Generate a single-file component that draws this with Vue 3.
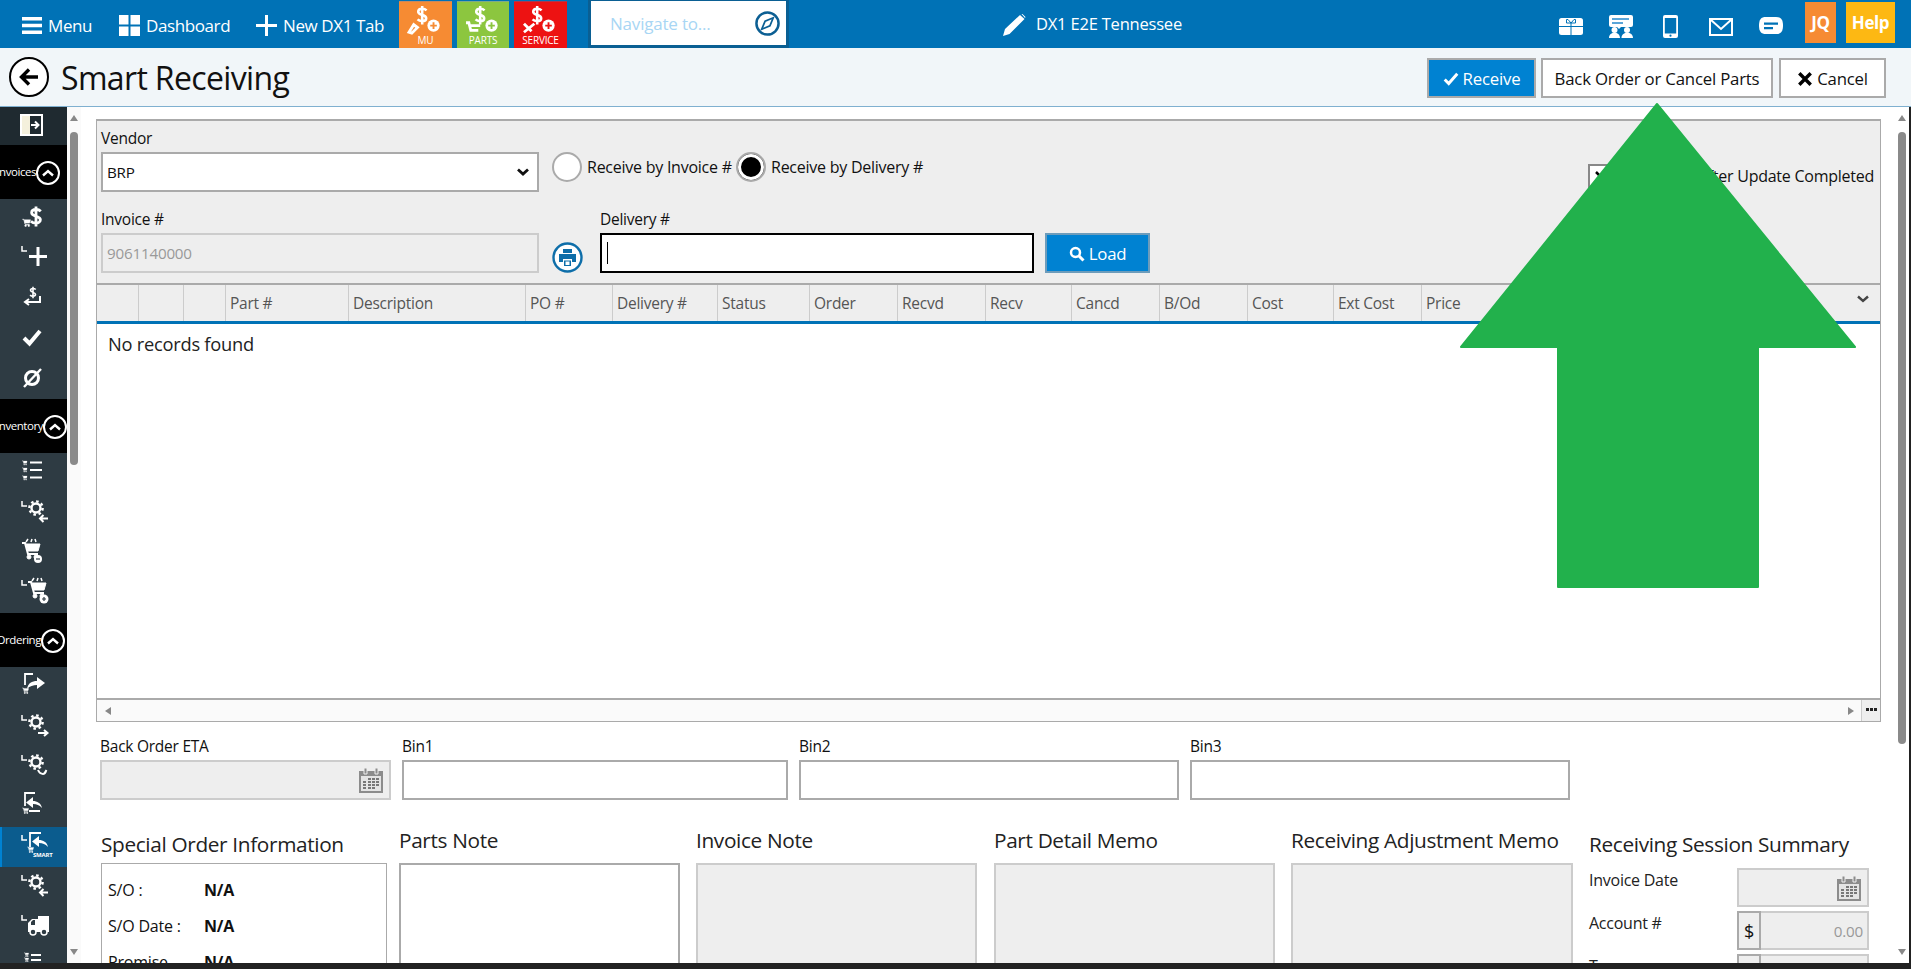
<script setup>
const sections = [
  { key: 'invoices', title: 'Invoices', items: ['cartdollar', 'plus', 'returndollar', 'check', 'nullset'] },
  { key: 'inventory', title: 'Inventory', items: ['cartlist', 'gearback', 'cartminus', 'cartplus'] },
  { key: 'ordering', title: 'Ordering', items: ['sendcart', 'gearforward', 'gearcycle', 'returncart', 'smart', 'gearback', 'truck', 'cartlist2'] }
]
const columns = ['', '', '', 'Part #', 'Description', 'PO #', 'Delivery #', 'Status', 'Order', 'Recvd', 'Recv', 'Cancd', 'B/Od', 'Cost', 'Ext Cost', 'Price']
const bins = ['Bin1', 'Bin2', 'Bin3']
const notes = [
  { title: 'Parts Note', cls: 'white' },
  { title: 'Invoice Note', cls: 'grey' },
  { title: 'Part Detail Memo', cls: 'grey detail' },
  { title: 'Receiving Adjustment Memo', cls: 'grey wide' }
]
const tiles = [
  { label: 'MU', cls: 'mu', mark: 'M9 32 L14 24 L18 27 L12 33 Z' },
  { label: 'PARTS', cls: 'parts', mark: 'M8 22 H11 L13 30 H21 M13 25 H23' },
  { label: 'SERVICE', cls: 'service', mark: 'M9 23 L17 31 M9 32 L20 23' }
]
const topIcons = ['gift', 'present', 'phone', 'mail', 'chat']
</script>

<template>
  <div class="app">
    <svg class="defs" aria-hidden="true">
      <symbol id="dollar" viewBox="0 0 16 26">
        <path d="M13.500 7C12 5.500 10.200 5 8 5 5.200 5 3 6.300 3 8.700c0 2.500 2.500 3.200 5 4 2.500.8 5 1.500 5 4 0 2.300-2.200 3.800-5 3.800-2.400 0-4.300-.7-5.800-2.200M8 1.500v23" fill="none" stroke="currentColor" stroke-width="3.200"/>
      </symbol>
      <symbol id="cal" viewBox="0 0 26 26">
        <path d="M1 4h24v22H1z" fill="#8c8c8c"/>
        <path d="M6 1h3v6H6zM17 1h3v6h-3z" fill="#8c8c8c" stroke="#eee"/>
        <path d="M3 9h20v15H3z" fill="#e4e4e4"/>
        <path d="M10 11h3v2h-3zM14 11h3v2h-3zM18 11h3v2h-3zM5 14h3v2H5zM10 14h3v2h-3zM14 14h3v2h-3zM18 14h3v2h-3zM5 17h3v2H5zM10 17h3v2h-3zM14 17h3v2h-3zM18 17h3v2h-3zM5 20h3v2H5zM10 20h3v2h-3zM14 20h3v2h-3z" fill="#777"/>
      </symbol>
      <symbol id="gift" viewBox="0 0 24 17">
        <rect width="24" height="17" rx="2.500" fill="#fff"/>
        <path d="M0 8.500h24M12 4v13" stroke="#0072b6" stroke-width="1"/>
        <path d="M12 5 9 1.500H7.500V5zM12 5l3-3.500h1.500V5z" fill="none" stroke="#0072b6" stroke-width="1"/>
      </symbol>
      <symbol id="present" viewBox="0 0 24 23">
        <path d="M2 0h20a2 2 0 0 1 2 2v8a2 2 0 0 1-2 2H12l-2 2-2-2H2a2 2 0 0 1-2-2V2a2 2 0 0 1 2-2z" fill="#fff"/>
        <path d="M3 3h17v2H3zM3 7h11v2H3z" fill="#5aa5d8"/>
        <circle cx="5.500" cy="15" r="3" fill="#fff"/><circle cx="18" cy="15" r="3" fill="#fff"/>
        <path d="M0 23c0-7 11-7 11 0zM12.500 23c0-7 11.500-7 11.500 0z" fill="#fff"/>
      </symbol>
      <symbol id="phone" viewBox="0 0 15 23">
        <path fill-rule="evenodd" d="M2 0h11a2 2 0 0 1 2 2v19a2 2 0 0 1-2 2H2a2 2 0 0 1-2-2V2a2 2 0 0 1 2-2zM1.800 3v15.500h11.400V3z" fill="#fff"/>
        <circle cx="7.500" cy="20.700" r="1.100" fill="#0072b6"/>
      </symbol>
      <symbol id="mail" viewBox="0 0 24 18">
        <path d="M1 1h22v16H1zM1.500 1.500 12 11 22.500 1.500" fill="none" stroke="#fff" stroke-width="2"/>
      </symbol>
      <symbol id="chat" viewBox="0 0 24 17">
        <path d="M7 0h10c5 0 7 2.500 7 8.500S22 17 17 17H7c-5 0-7-2.500-7-8.500S2 0 7 0z" fill="#fff"/>
        <path d="M5 5.500h14v2.200H5zM5 10h9v2.200H5z" fill="#0072b6"/>
      </symbol>
      <symbol id="compass" viewBox="0 0 26 26">
        <circle cx="13" cy="13" r="11.500" fill="none" stroke="#0c5f93" stroke-width="2.600"/>
        <path d="M19 7 15.500 15.500 7 19 10.500 10.500z" fill="none" stroke="#0c5f93" stroke-width="1.800"/>
      </symbol>
      <symbol id="chev" viewBox="0 0 14 10">
        <path d="M2 7.500 7 3l5 4.500" fill="none" stroke="currentColor" stroke-width="2.400"/>
      </symbol>
      <symbol id="gear" viewBox="0 0 20 20">
        <circle cx="10" cy="10" r="5.600" fill="none" stroke="#fff" stroke-width="3"/>
        <circle cx="10" cy="10" r="8.300" fill="none" stroke="#fff" stroke-width="3" stroke-dasharray="3.200 3.300"/>
      </symbol>
      <symbol id="cart" viewBox="0 0 20 20">
        <path d="M1 3h3l3 11h10" fill="none" stroke="#fff" stroke-width="2"/>
        <path d="M5 4h14l-2 7H7z" fill="#fff"/>
        <circle cx="8" cy="17" r="2" fill="#fff"/><circle cx="15" cy="17" r="2" fill="#fff"/>
      </symbol>
      <symbol id="lmark" viewBox="0 0 6 6">
        <path d="M1 0v5h5" fill="none" stroke="#fff" stroke-width="1.500"/>
      </symbol>
    </svg>

    <header class="topbar">
      <div class="nav-item menu">
        <svg class="ic-menu" viewBox="0 0 20 17"><path d="M0 0h20v3.500H0zM0 6.700h20v3.500H0zM0 13.500h20V17H0z" fill="#fff"/></svg>
        <span>Menu</span>
      </div>
      <div class="nav-item dash">
        <svg class="ic-dash" viewBox="0 0 21 21"><path d="M0 0h9.500v9.500H0zM11.500 0H21v9.500h-9.500zM0 11.500h9.500V21H0zM11.500 11.500H21V21h-9.500z" fill="#fff"/></svg>
        <span>Dashboard</span>
      </div>
      <div class="nav-item tab">
        <svg class="ic-dash" viewBox="0 0 21 21"><path d="M9 0h3v9h9v3h-9v9H9v-9H0V9h9z" fill="#fff"/></svg>
        <span>New DX1 Tab</span>
      </div>
      <div v-for="t in tiles" :key="t.label" class="tile" :class="t.cls">
        <svg class="tile-ic" viewBox="0 0 53 36">
          <use href="#dollar" x="16" y="3" width="14" height="22" color="#fff"/>
          <path :d="t.mark" fill="none" stroke="#fff" stroke-width="3"/>
          <circle cx="35" cy="25" r="6.500" fill="#fff"/>
          <path d="M35 21.500v7M31.500 25h7" class="tile-plus" stroke-width="2"/>
        </svg>
        <span>{{ t.label }}</span>
      </div>
      <div class="search-wrap">
        <div class="search">
          <span>Navigate to...</span>
          <svg class="ic-compass"><use href="#compass"/></svg>
        </div>
      </div>
      <div class="store">
        <svg class="ic-pencil" viewBox="0 0 25 23"><path d="M19 1l4.500 4L8.500 20 2 22l2-7zM20.500 0l1-.0 3 3-.5 1z" fill="#fff"/></svg>
        <span>DX1 E2E Tennessee</span>
      </div>
      <div class="tools">
        <svg v-for="i in topIcons" :key="i" class="tool" :class="i"><use :href="'#' + i"/></svg>
        <div class="badge jq">JQ</div>
        <div class="badge help">Help</div>
      </div>
    </header>

    <div class="subbar">
      <div class="back">
        <svg viewBox="0 0 24 24" class="ic-back"><path d="M21 12H5M12 4.500 4.500 12l7.500 7.500" fill="none" stroke="#000" stroke-width="3.400"/></svg>
      </div>
      <h1>Smart Receiving</h1>
      <div class="actions">
        <button class="btn primary"><svg class="ic-ok" viewBox="0 0 14 12"><path d="M1.500 6.500 5 10l7.500-8.500" fill="none" stroke="#fff" stroke-width="2.600"/></svg>Receive</button>
        <button class="btn bo">Back Order or Cancel Parts</button>
        <button class="btn cancel"><svg class="ic-ok" viewBox="0 0 14 14"><path d="M2 2l10 10M12 2 2 12" fill="none" stroke="#000" stroke-width="3"/></svg>Cancel</button>
      </div>
    </div>

    <div class="body">
      <aside class="sidebar">
        <div class="collapse">
          <svg viewBox="0 0 23 22" class="ic-collapse">
            <path d="M1 1h21v20H1z" fill="#1f2a30" stroke="#fff" stroke-width="2"/>
            <path d="M2 2h8v18H2z" fill="#f4f0dc"/>
            <path d="M11 11h7M15 7.500l3.500 3.500-3.500 3.500" fill="none" stroke="#fff" stroke-width="2"/>
          </svg>
        </div>
        <template v-for="s in sections" :key="s.key">
          <div class="side-head" :class="s.key">
            <span>{{ s.title }}</span>
            <i class="circle"><svg viewBox="0 0 14 10"><use href="#chev" color="#fff"/></svg></i>
          </div>
          <div v-for="(it, n) in s.items" :key="n" class="side-item" :class="{ active: it === 'smart' }">
            <svg class="side-ic" viewBox="0 0 67 40" fill="none" stroke="#fff">
              <template v-if="it === 'cartdollar'">
                <use href="#dollar" x="29" y="7" width="14" height="23" color="#fff"/>
                <use href="#cart" x="22" y="20" width="9" height="9"/>
              </template>
              <template v-else-if="it === 'plus'">
                <use href="#lmark" x="21" y="8" width="6" height="6"/>
                <path d="M38 9v19M29 18.500h18" stroke-width="3"/>
              </template>
              <template v-else-if="it === 'returndollar'">
                <use href="#dollar" x="29" y="8" width="8" height="13" color="#fff"/>
                <path d="M40 18v6H26M29 21l-4 3 4 3" stroke-width="2"/>
              </template>
              <path v-else-if="it === 'check'" d="M24 20l5.500 5.500L40 13" stroke-width="4"/>
              <template v-else-if="it === 'nullset'">
                <circle cx="32" cy="20" r="6.500" stroke-width="3"/>
                <path d="M24 29 41 11" stroke-width="2.400"/>
              </template>
              <template v-else-if="it === 'cartlist'">
                <use href="#cart" x="22" y="8" width="5.500" height="5.500"/>
                <use href="#cart" x="22" y="15" width="5.500" height="5.500"/>
                <use href="#cart" x="22" y="23" width="5.500" height="5.500"/>
                <path d="M30 10.500h12M30 18h12M30 25.500h12" stroke-width="2"/>
              </template>
              <template v-else-if="it === 'gearback'">
                <use href="#lmark" x="21" y="9" width="6" height="6"/>
                <use href="#gear" x="28" y="8" width="16" height="16"/>
                <path d="M48 26.500h-8M43.500 23l-3.500 3.500 3.500 3.500" stroke-width="2"/>
              </template>
              <template v-else-if="it === 'gearforward'">
                <use href="#lmark" x="21" y="9" width="6" height="6"/>
                <use href="#gear" x="28" y="8" width="16" height="16"/>
                <path d="M38 27h9M44 24l3.500 3-3.500 3" stroke-width="2"/>
              </template>
              <template v-else-if="it === 'gearcycle'">
                <use href="#lmark" x="21" y="9" width="6" height="6"/>
                <use href="#gear" x="28" y="8" width="16" height="16"/>
                <path d="M38 24c2 5 7 5 8 1M44 28l2.500-4" stroke-width="2"/>
              </template>
              <template v-else-if="it === 'cartminus'">
                <use href="#cart" x="21" y="8" width="20" height="20"/>
                <path d="M26 10l2-3M31 10l1-3M36 10l-1-3" stroke-width="1.500"/>
                <circle cx="38" cy="27" r="4" fill="#fff" stroke="none"/>
                <path d="M36 27h4" stroke="#2e3b43" stroke-width="1.200"/>
              </template>
              <template v-else-if="it === 'cartplus'">
                <use href="#lmark" x="21" y="8" width="6" height="6"/>
                <use href="#cart" x="27" y="7" width="20" height="20"/>
                <path d="M32 9l2-3M37 9l1-3M42 9l-1-3" stroke-width="1.500"/>
                <circle cx="44" cy="27" r="4.500" fill="#fff" stroke="none"/>
                <path d="M44 25v4M42 27h4" stroke="#2e3b43" stroke-width="1.200"/>
              </template>
              <template v-else-if="it === 'sendcart'">
                <path d="M33 8H25v11M25 8" stroke-width="1.800"/>
                <path d="M27 23c1-6 5-8 10-8v-4l8 6-8 6v-4c-4 0-7 1-10 4z" fill="#fff" stroke="none"/>
                <use href="#cart" x="22" y="21" width="7" height="7"/>
              </template>
              <template v-else-if="it === 'returncart'">
                <path d="M35 7H25v13M29 25h11" stroke-width="1.800"/>
                <path d="M42 22c-1-5-5-7-9-7v-4l-7 5.500 7 5.500v-4c4 0 6 1 9 4z" fill="#fff" stroke="none"/>
                <use href="#cart" x="22" y="21" width="7" height="7"/>
              </template>
              <template v-else-if="it === 'smart'">
                <use href="#lmark" x="21" y="9" width="6" height="6"/>
                <path d="M41 7H30v14" stroke-width="1.800"/>
                <path d="M48 21c-1-5-5-7-9-7v-4l-7 5.500 7 5.500v-4c4 0 6 1 9 4z" fill="#fff" stroke="none"/>
                <use href="#cart" x="27" y="20" width="7" height="7"/>
                <text x="33" y="31" class="smart-txt" fill="#fff" stroke="none">SMART</text>
              </template>
              <template v-else-if="it === 'truck'">
                <use href="#lmark" x="21" y="9" width="6" height="6"/>
                <path d="M38 10h11v16H28v-9l4-4h6z" fill="#fff" stroke="none"/>
                <path d="M31 19v-3l2-2h2v5z" fill="#2e3b43" stroke="none"/>
                <circle cx="33" cy="26" r="3" fill="#2e3b43" stroke="#fff" stroke-width="1.500"/>
                <circle cx="44" cy="26" r="3" fill="#2e3b43" stroke="#fff" stroke-width="1.500"/>
              </template>
              <template v-else-if="it === 'cartlist2'">
                <use href="#cart" x="24" y="6" width="5" height="5"/>
                <use href="#cart" x="24" y="11" width="5" height="5"/>
                <path d="M31 9h10M31 14h10" stroke-width="2"/>
              </template>
            </svg>
          </div>
        </template>
      </aside>

      <div class="vscroll left">
        <b class="arr up"></b><i class="thumb"></i><b class="arr down"></b>
      </div>

      <main class="content">
        <section class="panel">
          <div class="form-row one">
            <div class="field vendor">
              <label>Vendor</label>
              <div class="ctl select">
                <span>BRP</span>
                <svg class="sel-chev" viewBox="0 0 14 10"><path d="M2 2.500 7 7l5-4.500" fill="none" stroke="#111" stroke-width="2.800"/></svg>
              </div>
            </div>
            <div class="radio first"><i class="dot"></i><span>Receive by Invoice #</span></div>
            <div class="radio second"><i class="dot on"></i><span>Receive by Delivery #</span></div>
            <div class="print-after">
              <i class="box"><svg viewBox="0 0 14 14"><path d="M2 2l10 10M12 2 2 12" fill="none" stroke="#000" stroke-width="2.500"/></svg></i>
              <span>Print Label After Update Completed</span>
            </div>
          </div>
          <div class="form-row two">
            <div class="field vendor">
              <label>Invoice #</label>
              <div class="ctl disabled"><span>9061140000</span></div>
            </div>
            <div class="print">
              <svg viewBox="0 0 31 31">
                <circle cx="15.500" cy="15.500" r="14" fill="#fff" stroke="#0e6ea9" stroke-width="2.400"/>
                <path d="M11 7h9v4h-9zM7 12h17v8h-4v-3h-9v3H7z" fill="#0e6ea9"/>
                <path d="M12 18.500h7V24h-7z" fill="#0e6ea9"/>
                <path d="M13.500 19.500h4V23h-4z" fill="#fff"/>
              </svg>
            </div>
            <div class="field delivery">
              <label>Delivery #</label>
              <div class="ctl focus"><i class="caret"></i></div>
            </div>
            <button class="btn load">
              <svg class="ic-search" viewBox="0 0 16 16"><circle cx="6.500" cy="6.500" r="4.500" fill="none" stroke="#fff" stroke-width="2.500"/><path d="M10 10l4.500 4.500" stroke="#fff" stroke-width="3"/></svg>Load
            </button>
          </div>

          <div class="grid-head">
            <div v-for="(c, i) in columns" :key="i" class="th">{{ c }}</div>
            <div class="th last">
              <svg class="head-chev" viewBox="0 0 14 10"><path d="M2 2.500 7 7l5-4.500" fill="none" stroke="#444" stroke-width="2.400"/></svg>
            </div>
          </div>
          <div class="grid-body">No records found</div>
          <div class="hscroll">
            <b class="tri l"></b>
            <b class="tri r"></b>
            <div class="more"><svg viewBox="0 0 11 3" class="ic-more"><path d="M0 0h3v3H0zM4 0h3v3H4zM8 0h3v3H8z" fill="#222"/></svg></div>
          </div>
        </section>

        <div class="bin-row">
          <div class="field eta">
            <label>Back Order ETA</label>
            <div class="ctl disabled cal-ctl"><svg class="ic-cal"><use href="#cal"/></svg></div>
          </div>
          <div v-for="b in bins" :key="b" class="field bin" :class="b">
            <label>{{ b }}</label>
            <div class="ctl"></div>
          </div>
        </div>

        <div class="notes-row">
          <div class="col special">
            <h2 class="low">Special Order Information</h2>
            <div class="so-box">
              <div class="so"><span>S/O :</span><b>N/A</b></div>
              <div class="so"><span>S/O Date :</span><b>N/A</b></div>
              <div class="so"><span>Promise</span><b>N/A</b></div>
            </div>
          </div>
          <div v-for="n in notes" :key="n.title" class="col note" :class="n.cls">
            <h2>{{ n.title }}</h2>
            <div class="memo"></div>
          </div>
          <div class="col summary">
            <h2 class="low sum">Receiving Session Summary</h2>
            <div class="sum-row">
              <label>Invoice Date</label>
              <div class="ctl disabled cal-ctl small"><svg class="ic-cal"><use href="#cal"/></svg></div>
            </div>
            <div class="sum-row">
              <label>Account #</label>
              <div class="ctl disabled money"><i>$</i><span>0.00</span></div>
            </div>
            <div class="sum-row">
              <label>Tax</label>
              <div class="ctl disabled money"><i>$</i><span>0.00</span></div>
            </div>
          </div>
        </div>
      </main>

      <div class="vscroll right">
        <b class="arr up"></b><i class="thumb"></i><b class="arr down"></b>
      </div>
    </div>
    <div class="strip"></div>

    <svg class="big-arrow" viewBox="0 0 1911 969" aria-hidden="true">
      <path d="M1657 104 1855 347H1758V587H1558V347H1461Z" fill="#22b14c" stroke="#22b14c" stroke-width="2" stroke-linejoin="round"/>
    </svg>
  </div>
</template>

<style>
html, body { margin: 0; padding: 0; background: #fff; overflow: hidden; }
</style>

<style scoped>
* { box-sizing: border-box; }
.app {
  position: relative; width: 1911px; height: 969px; overflow: hidden; display: flex; flex-direction: column;
  font-family: "Open Sans", "Noto Sans", "Liberation Sans", sans-serif; color: #111; background: #fff;
  font-size: 15px;
}
.defs { position: absolute; width: 0; height: 0; }

.topbar { height: 48px; flex: none; background: #0072b6; display: flex; align-items: stretch; color: #fff; padding-left: 22px; }
.nav-item { display: flex; align-items: center; gap: 6px; font-size: 17px; letter-spacing: -0.4px; padding-top: 3px; }
.nav-item.menu { width: 97px; }
.nav-item.dash { width: 137px; }
.nav-item.tab { width: 143px; }
.ic-menu { width: 20px; height: 17px; }
.ic-dash { width: 21px; height: 21px; }
.tile { width: 53px; margin: 1px 5px 0 0; display: flex; flex-direction: column; align-items: center; font-size: 10px; letter-spacing: -0.2px; }
.tile span { margin-top: -1px; line-height: 11px; }
.tile-ic { width: 53px; height: 34px; flex: none; }
.tile.parts { width: 52px; }
.tile.mu { background: #f68b33; border-top: 1px solid #c58a60; }
.tile.parts { background: #8cc63f; border-top: 1px solid #7fa98a; }
.tile.service { background: #ed1212; border-top: 1px solid #a83a50; }
.tile-plus { fill: none; }
.tile.mu .tile-plus { stroke: #f68b33; }
.tile.parts .tile-plus { stroke: #8cc63f; }
.tile.service .tile-plus { stroke: #ed1212; }
.search-wrap { margin-left: 16px; width: 201px; background: #0a5f93; padding: 1px 3px 3px; }
.search { height: 44px; background: #fff; display: flex; align-items: center; justify-content: space-between; padding: 0 6px 0 19px; color: #a8d6f4; font-size: 17px; letter-spacing: -0.2px; }
.ic-compass { width: 25px; height: 25px; }
.store { margin-left: 212px; display: flex; align-items: center; gap: 10px; font-size: 16.500px; letter-spacing: -0.2px; padding-bottom: 1px; }
.ic-pencil { width: 25px; height: 23px; margin-top: 3px; }
.tools { margin-left: auto; padding-right: 16px; display: flex; align-items: flex-start; }
.tool { flex: none; }
.tool.gift { width: 24px; height: 17px; margin-top: 18px; }
.tool.present { width: 24px; height: 23px; margin: 15px 0 0 26px; }
.tool.phone { width: 15px; height: 23px; margin: 15px 0 0 30px; }
.tool.mail { width: 24px; height: 18px; margin: 18px 0 0 31px; }
.tool.chat { width: 24px; height: 17px; margin: 17px 0 0 26px; }
.badge { height: 41px; margin-top: 2px; display: flex; align-items: center; justify-content: center; font-size: 17px; font-weight: 700; letter-spacing: -0.4px; }
.jq { width: 31px; background: #f68b33; margin-left: 22px; }
.help { width: 49px; background: #fdb813; margin-left: 10px; }

.subbar { height: 59px; flex: none; background: #f1f6f9; border-bottom: 1px solid #7fb0d0; display: flex; align-items: center; padding-left: 9px; padding-right: 25px; }
.back { width: 40px; height: 40px; border: 2px solid #000; border-radius: 50%; display: flex; align-items: center; justify-content: center; background: #fff; }
.ic-back { width: 24px; height: 24px; }
h1 { margin: 0 0 0 12px; font-size: 32px; font-weight: 400; letter-spacing: -0.65px; color: #111; }
.actions { margin-left: auto; display: flex; gap: 5px; padding-top: 1px; }
.btn { height: 40px; border: 2px solid #aaa; background: #fff; color: #111; font: inherit; font-size: 16.800px; letter-spacing: -0.2px; display: flex; align-items: center; justify-content: center; gap: 4px; padding: 2px 0 0; }
.btn.primary { width: 109px; background: #0082d2; color: #fff; }
.btn.bo { width: 232px; }
.btn.cancel { width: 107px; margin-left: 1px; }
.ic-ok { width: 16px; height: 16px; }

.body { flex: 1; min-height: 0; display: flex; border-right: 2px solid #222; }
.sidebar { width: 67px; flex: none; background: #2e3b43; overflow: hidden; }
.collapse { height: 38px; background: #1f2a30; display: flex; justify-content: center; padding: 7px 0 0 0; }
.ic-collapse { width: 23px; height: 22px; margin-left: -4px; }
.side-head { height: 54px; background: #000; color: #fff; display: flex; justify-content: flex-end; align-items: center; font-size: 11.500px; letter-spacing: -0.45px; overflow: hidden; padding-top: 1px; }
.side-head span { flex: none; padding-bottom: 2px; }
.side-head.invoices { padding-right: 7px; }
.side-head.inventory { padding-right: 0; }
.side-head.ordering { padding-right: 2px; }
.circle { flex: none; width: 24px; height: 24px; border: 2px solid #fff; border-radius: 50%; display: flex; align-items: center; justify-content: center; }
.circle svg { width: 14px; height: 10px; }
.side-item { height: 40px; display: flex; align-items: flex-start; }
.side-item.active { background: #0b5c8e; border-left: 2px solid #0082d2; }
.side-item.active .side-ic { margin-left: -2px; }
.side-ic { width: 67px; height: 40px; flex: none; display: block; margin-top: -1px; }
.smart-txt { font-size: 6px; font-family: "Open Sans", sans-serif; font-weight: 700; letter-spacing: -0.2px; }

.vscroll { flex: none; display: flex; flex-direction: column; align-items: center; padding: 8px 0; background: #fafafa; }
.vscroll.left { width: 14px; margin-right: 15px; margin-left: 0; }
.vscroll.right { width: 14px; margin-left: 14px; background: #fff; }
.thumb { width: 8px; background: #8a8a8a; border-radius: 4px; display: block; margin-top: 11px; }
.left .thumb { height: 333px; }
.right .thumb { height: 612px; }
.arr { width: 0; height: 0; border-left: 4px solid transparent; border-right: 4px solid transparent; display: block; }
.arr.up { border-bottom: 6px solid #888; }
.arr.down { border-top: 6px solid #888; margin-top: auto; }

.content { width: 1785px; flex: none; padding-top: 12px; }
.panel { height: 603px; border: 1px solid #aaa; border-top-width: 2px; background: #eee; display: flex; flex-direction: column; }
.form-row { display: flex; padding-left: 4px; }
.form-row.one { padding-top: 8px; padding-right: 6px; }
.form-row.two { margin-top: 18px; height: 73px; align-items: flex-start; }
.field label { display: block; height: 20px; line-height: 19px; margin-bottom: 3px; font-size: 15.500px; letter-spacing: -0.25px; }
.vendor { width: 438px; flex: none; }
.ctl { height: 40px; border: 2px solid #aaa; background: #fff; display: flex; align-items: center; padding: 0 4px; font-size: 15.200px; letter-spacing: -0.2px; }
.select { justify-content: space-between; padding-right: 7px; }
.sel-chev { width: 14px; height: 10px; }
.ctl.disabled { background: #eee; border-color: #ccc; color: #999; }
.ctl.focus { border-color: #000; padding-left: 5px; }
.caret { width: 1px; height: 22px; background: #000; }
.radio { display: flex; align-items: center; height: 30px; margin-top: 23px; font-size: 16px; letter-spacing: -0.25px; gap: 5px; white-space: nowrap; }
.radio.first { margin-left: 13px; width: 184px; }
.radio.second { width: 190px; }
.dot { width: 30px; height: 30px; flex: none; border: 2px solid #aaa; border-radius: 50%; background: #fff; }
.dot.on { background: #000; box-shadow: inset 0 0 0 3px #fff; }
.print-after { margin-left: auto; margin-top: 35px; width: 286px; display: flex; justify-content: space-between; align-items: flex-start; font-size: 16px; letter-spacing: -0.25px; white-space: nowrap; }
.box { width: 26px; height: 26px; flex: none; border: 2px solid #888; background: #fff; display: flex; align-items: center; justify-content: center; }
.box svg { width: 14px; height: 14px; }
.print-after span { line-height: 24px; }
.print { width: 31px; height: 31px; margin: 32px 0 0 13px; flex: none; }
.print svg { width: 31px; height: 31px; display: block; }
.delivery { width: 434px; margin-left: 17px; flex: none; }
.btn.load { width: 105px; height: 40px; margin: 23px 0 0 11px; background: #0082d2; border-color: #6d9cbb; color: #fff; padding-top: 1px; }
.ic-search { width: 16px; height: 16px; }

.grid-head { height: 41px; flex: none; display: grid; grid-template-columns: 42px 45px 42px 123px 177px 87px 105px 92px 88px 88px 86px 88px 88px 86px 88px 1fr 40px; border-top: 2px solid #aaa; border-bottom: 3px solid #0072b6; }
.th { border-right: 1px solid #ccc; padding-left: 4px; display: flex; align-items: center; font-size: 15.500px; letter-spacing: -0.25px; color: #555; white-space: nowrap; }
.th:nth-last-child(2), .th.last { border-right: 0; }
.head-chev { width: 14px; height: 10px; margin-top: -9px; margin-left: 12px; }
.grid-body { flex: 1; background: #fff; padding: 8px 11px; font-size: 18.300px; line-height: 24px; letter-spacing: -0.25px; color: #222; }
.hscroll { height: 23px; flex: none; border-top: 2px solid #aaa; background: #fafafa; display: flex; align-items: center; padding-left: 8px; }
.tri { width: 0; height: 0; border-top: 4px solid transparent; border-bottom: 4px solid transparent; display: block; }
.tri.l { border-right: 6px solid #888; }
.tri.r { border-left: 6px solid #888; margin-left: auto; margin-right: 7px; }
.more { width: 19px; height: 21px; background: #eee; border-left: 1px solid #ccc; display: flex; align-items: center; justify-content: center; }
.ic-more { width: 11px; height: 3px; margin-top: -3px; }

.bin-row { display: flex; gap: 11px; margin-top: 15px; padding-left: 4px; }
.eta { width: 291px; }
.Bin1 { width: 386px; }
.Bin2, .Bin3 { width: 380px; }
.cal-ctl { justify-content: flex-end; padding-right: 5px; }
.ic-cal { width: 26px; height: 26px; }

.notes-row { display: flex; margin-top: 31px; padding-left: 5px; }
.col { flex: none; }
h2 { margin: -5px 0 0; height: 37px; line-height: 28px; font-size: 20.800px; font-weight: 400; letter-spacing: -0.35px; color: #222; white-space: nowrap; }
h2.low { margin-top: -1px; height: 33px; }
h2.sum { height: 38px; }
.special { width: 286px; }
.note { width: 281px; margin-left: 12px; }
.note.grey { margin-left: 16px; }
.note.detail { margin-left: 17px; }
.note.wide { width: 282px; }
.so-box { height: 140px; border: 1px solid #aaa; padding: 8px 6px; }
.so { display: flex; height: 36px; align-items: center; font-size: 16px; letter-spacing: -0.2px; }
.so span { width: 96px; }
.so b { font-weight: 700; }
.memo { height: 140px; border: 2px solid #aaa; background: #fff; }
.grey .memo { background: #eee; border-color: #ccc; }
.summary { width: 281px; margin-left: 16px; }
.sum-row { display: flex; margin-bottom: 4px; font-size: 16px; letter-spacing: -0.25px; }
.sum-row label { width: 148px; padding-top: 2px; line-height: 20px; color: #222; flex: none; }
.sum-row .ctl { width: 132px; height: 39px; }
.money { padding: 0 4px 0 0; justify-content: space-between; }
.money i { font-style: normal; width: 24px; height: 39px; margin: -2px 0 -2px -2px; border: 2px solid #aaa; color: #111; font-size: 18px; display: flex; align-items: center; justify-content: center; }

.strip { height: 6px; flex: none; background: #222; }
.big-arrow { position: absolute; left: 0; top: 0; width: 1911px; height: 969px; pointer-events: none; }
</style>
